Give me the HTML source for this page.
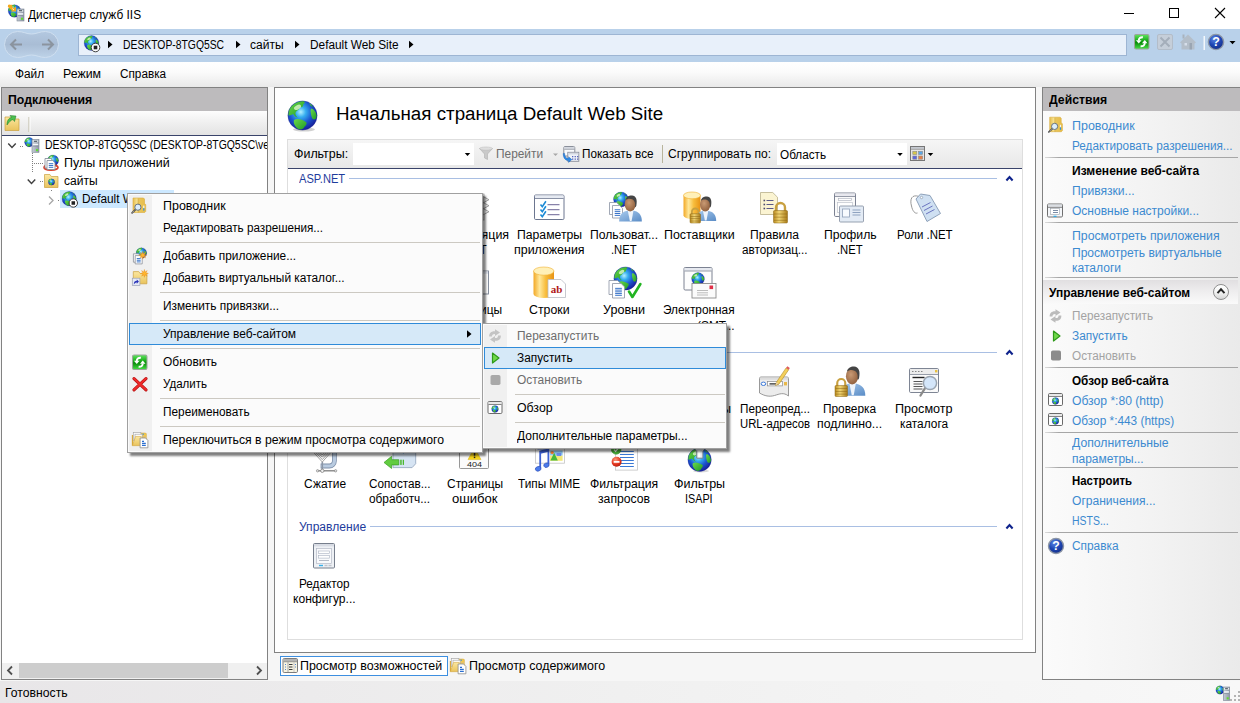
<!DOCTYPE html>
<html lang="ru"><head><meta charset="utf-8"><title>Диспетчер служб IIS</title>
<style>

html,body{margin:0;padding:0}
body{width:1240px;height:703px;position:relative;overflow:hidden;background:#f6f6f6;font-family:"Liberation Sans",sans-serif;font-size:12px;color:#000}
.a{position:absolute}
.t{position:absolute;white-space:nowrap;line-height:16px;height:16px;transform-origin:0 50%;font-size:12px}
.b{font-weight:bold}
.lk{color:#3c8ad0}
.gr{color:#a3a3a3}
.gm{color:#6d6d6d}
.hd{color:#1e3c9c}
.h1{font-size:18px;line-height:24px;height:24px;margin-top:-4px}
.sep{position:absolute;height:1px;background:#ccc9c2}
.rsep{position:absolute;height:1px;background:linear-gradient(90deg,#dcdcdc,#a6a6a6 14px);left:1045px;width:193px}
.gl{position:absolute;height:1px;background:#a9bfe3}

</style></head>
<body>

<!-- title bar -->
<div class="a" style="left:0;top:0;width:1240px;height:29px;background:#fff"></div>
<!-- nav bar -->
<div class="a" style="left:0;top:29px;width:1240px;height:33px;background:#b9d1ea"></div>
<div class="a" style="left:78px;top:34px;width:1047px;height:20px;background:#e8f0fa;border:1px solid #9db5d3"></div>
<!-- menu bar -->
<div class="a" style="left:0;top:62px;width:1240px;height:25px;background:linear-gradient(#fff,#fbfbfb 40%,#e9e9e9)"></div>
<!-- left panel -->
<div class="a" style="left:1px;top:87px;width:265px;height:591px;background:#fff;border:1px solid #828282"></div>
<div class="a" style="left:2px;top:88px;width:265px;height:22.5px;background:#bdbbbd"></div>
<div class="a" style="left:2px;top:110.5px;width:265px;height:24.5px;background:linear-gradient(#fdfdfd,#efefef 50%,#e3e3e3);border-bottom:1px solid #39436a"></div>
<div class="a" style="left:60px;top:190px;width:114px;height:18px;background:#cce8ff"></div>
<div class="a" style="left:2px;top:663px;width:265px;height:16px;background:#f0f0f0"></div>
<div class="a" style="left:19px;top:663px;width:209px;height:15px;background:#cdcdcd"></div>
<span class="t tree1" style="left:44.7px;top:137px;transform:scaleX(0.8699)">DESKTOP-8TGQ5SC (DESKTOP-8TGQ5SC\ve</span>
<div class="a" style="left:267px;top:87px;width:1px;height:593px;background:#828282"></div>
<div class="a" style="left:268px;top:87px;width:6px;height:594px;background:#f6f6f6"></div>
<!-- center panel -->
<div class="a" style="left:274px;top:87px;width:760px;height:564px;background:#fff;border:1px solid #828282"></div>
<div class="a" style="left:287px;top:139px;width:734px;height:499px;background:#fff;border:1px solid #dedede"></div>
<div class="a" style="left:288px;top:140px;width:734px;height:28px;background:linear-gradient(#f6f6f6,#e8e8e8)"></div>
<div class="a" style="left:288px;top:168px;width:734px;height:1px;background:#39436a"></div>
<div class="a" style="left:353px;top:143px;width:121px;height:22px;background:#fff"></div>
<div class="a" style="left:777px;top:143px;width:130px;height:22px;background:#fff"></div>
<div class="a" style="left:662px;top:145px;width:1px;height:18px;background:#b8b49c"></div>
<div class="gl" style="left:349px;top:178px;width:648px"></div>
<div class="gl" style="left:288px;top:352px;width:709px"></div>
<div class="gl" style="left:370px;top:526px;width:627px"></div>
<!-- tabs strip -->

<div class="a" style="left:280px;top:656px;width:166px;height:18px;background:#fff;border:1px solid #3d8fe0"></div>
<!-- right panel -->
<div class="a" style="left:1042px;top:87px;width:198px;height:591px;background:linear-gradient(90deg,#fbfbfb,#f3f3f3 55%,#eaeaea);border:1px solid #828282;border-right:0"></div>
<div class="a" style="left:1043px;top:88px;width:197px;height:22.5px;background:#bdbbbd"></div>
<div class="rsep" style="top:157px"></div>
<div class="rsep" style="top:222px"></div>
<div class="rsep" style="top:277px"></div>
<div class="a" style="left:1043px;top:280px;width:195px;height:24px;background:linear-gradient(#e1dfe1,#efeeef 50%,#fafafa)"></div>
<div class="a" style="left:1213px;top:284px;width:14px;height:14px;border-radius:50%;border:1px solid #8e8e8e;background:linear-gradient(#fff,#f4f4f4 50%,#d6d6d6)"></div>
<div class="rsep" style="top:367px"></div>
<div class="rsep" style="top:432px"></div>
<div class="rsep" style="top:467px"></div>
<div class="rsep" style="top:532px"></div>
<!-- status bar -->
<div class="a" style="left:0;top:681px;width:1240px;height:22px;background:linear-gradient(90deg,#e8e6e8,#f0f0f0 50%,#f8f8f8)"></div>

<!-- text -->
<span class="t " style="left:28.2px;top:6.5px;transform:scaleX(0.9902)">Диспетчер служб IIS</span>
<span class="t " style="left:122.7px;top:36.5px;transform:scaleX(0.8631)">DESKTOP-8TGQ5SC</span>
<span class="t " style="left:250.2px;top:36.5px;transform:scaleX(1.0030)">сайты</span>
<span class="t " style="left:310.2px;top:36.5px;transform:scaleX(0.9863)">Default Web Site</span>
<span class="t " style="left:14.7px;top:66px;transform:scaleX(0.9859)">Файл</span>
<span class="t " style="left:62.7px;top:66px;transform:scaleX(1.0297)">Режим</span>
<span class="t " style="left:119.7px;top:66px;transform:scaleX(0.9792)">Справка</span>
<span class="t b" style="left:8.2px;top:92px;transform:scaleX(1.0225)">Подключения</span>
<span class="t " style="left:63.7px;top:155px;transform:scaleX(1.0393)">Пулы приложений</span>
<span class="t " style="left:63.7px;top:173px;transform:scaleX(1.0030)">сайты</span>
<span class="t " style="left:82.2px;top:191px;transform:scaleX(0.9863)">Default Web Site</span>
<span class="t h1" style="left:336.3px;top:106px;transform:scaleX(1.0423)">Начальная страница Default Web Site</span>
<span class="t " style="left:294.2px;top:146px;transform:scaleX(1.0348)">Фильтры:</span>
<span class="t gm" style="left:496px;top:146px;transform:scaleX(0.9903)">Перейти</span>
<span class="t " style="left:581.7px;top:146px;transform:scaleX(0.9773)">Показать все</span>
<span class="t " style="left:668.2px;top:146px;transform:scaleX(1.0022)">Сгруппировать по:</span>
<span class="t " style="left:780.2px;top:147px;transform:scaleX(0.9789)">Область</span>
<span class="t hd" style="left:299.2px;top:171px;transform:scaleX(0.9255)">ASP.NET</span>
<span class="t hd" style="left:299.2px;top:519px;transform:scaleX(1.0057)">Управление</span>
<span class="t " style="left:4.7px;top:685px;transform:scaleX(1.0166)">Готовность</span>
<span class="t " style="left:300.2px;top:658px;transform:scaleX(1.0351)">Просмотр возможностей</span>
<span class="t " style="left:469.2px;top:658px;transform:scaleX(1.0351)">Просмотр содержимого</span>
<span class="t b" style="left:1049.2px;top:92px;transform:scaleX(1.0182)">Действия</span>
<span class="t lk" style="left:1071.7px;top:118px;transform:scaleX(1.0395)">Проводник</span>
<span class="t lk" style="left:1071.7px;top:138px;transform:scaleX(0.9768)">Редактировать разрешения...</span>
<span class="t b" style="left:1071.7px;top:163px;transform:scaleX(1.0010)">Изменение веб-сайта</span>
<span class="t lk" style="left:1071.7px;top:183px;transform:scaleX(1.0064)">Привязки...</span>
<span class="t lk" style="left:1071.7px;top:203px;transform:scaleX(1.0002)">Основные настройки...</span>
<span class="t lk" style="left:1071.7px;top:228px;transform:scaleX(1.0232)">Просмотреть приложения</span>
<span class="t lk" style="left:1071.7px;top:245px;transform:scaleX(1.0040)">Просмотреть виртуальные</span>
<span class="t lk" style="left:1071.7px;top:260px;transform:scaleX(1.0049)">каталоги</span>
<span class="t b" style="left:1049.2px;top:285.4px;transform:scaleX(0.9934)">Управление веб-сайтом</span>
<span class="t gr" style="left:1071.7px;top:308px;transform:scaleX(0.9786)">Перезапустить</span>
<span class="t lk" style="left:1071.7px;top:328px;transform:scaleX(0.9887)">Запустить</span>
<span class="t gr" style="left:1071.7px;top:348px;transform:scaleX(0.9786)">Остановить</span>
<span class="t b" style="left:1071.7px;top:373px;transform:scaleX(0.9776)">Обзор веб-сайта</span>
<span class="t lk" style="left:1071.7px;top:393px;transform:scaleX(1.0101)">Обзор *:80 (http)</span>
<span class="t lk" style="left:1071.7px;top:413px;transform:scaleX(0.9878)">Обзор *:443 (https)</span>
<span class="t lk" style="left:1071.7px;top:435px;transform:scaleX(1.0168)">Дополнительные</span>
<span class="t lk" style="left:1071.7px;top:450.5px;transform:scaleX(0.9966)">параметры...</span>
<span class="t b" style="left:1071.7px;top:473px;transform:scaleX(0.9511)">Настроить</span>
<span class="t lk" style="left:1071.7px;top:493px;transform:scaleX(1.0053)">Ограничения...</span>
<span class="t lk" style="left:1071.7px;top:513px;transform:scaleX(0.8711)">HSTS...</span>
<span class="t lk" style="left:1071.7px;top:538px;transform:scaleX(0.9898)">Справка</span>
<span class="t " style="left:438.2px;top:227px;transform:scaleX(1.0349)">Компиляция</span>
<span class="t " style="left:461.2px;top:242px;transform:scaleX(0.9362)">.NET</span>
<span class="t " style="left:517.2px;top:227px;transform:scaleX(1.0177)">Параметры</span>
<span class="t " style="left:514.2px;top:242px;transform:scaleX(1.0368)">приложения</span>
<span class="t " style="left:590.2px;top:227px;transform:scaleX(1.0141)">Пользоват...</span>
<span class="t " style="left:611.2px;top:242px;transform:scaleX(0.9362)">.NET</span>
<span class="t " style="left:664.2px;top:227px;transform:scaleX(1.0344)">Поставщики</span>
<span class="t " style="left:750.2px;top:227px;transform:scaleX(1.0075)">Правила</span>
<span class="t " style="left:741.7px;top:242px;transform:scaleX(0.9755)">авторизац...</span>
<span class="t " style="left:823.7px;top:227px;transform:scaleX(1.0152)">Профиль</span>
<span class="t " style="left:837.2px;top:242px;transform:scaleX(0.9362)">.NET</span>
<span class="t " style="left:896.7px;top:227px;transform:scaleX(0.9543)">Роли .NET</span>
<span class="t " style="left:446.2px;top:302px;transform:scaleX(0.9957)">Страницы</span>
<span class="t " style="left:529.2px;top:302px;transform:scaleX(1.0287)">Строки</span>
<span class="t " style="left:603.2px;top:302px;transform:scaleX(1.0488)">Уровни</span>
<span class="t " style="left:663.2px;top:302px;transform:scaleX(0.9867)">Электронная</span>
<span class="t " style="left:663.2px;top:317.5px;transform:scaleX(0.9872)">почта (SMT...</span>
<span class="t " style="left:666.2px;top:401px;transform:scaleX(1.0177)">Параметры</span>
<span class="t " style="left:687.7px;top:416px;transform:scaleX(0.9741)">SSL</span>
<span class="t " style="left:739.7px;top:401px;transform:scaleX(0.9749)">Переопред...</span>
<span class="t " style="left:739.7px;top:416px;transform:scaleX(0.9445)">URL-адресов</span>
<span class="t " style="left:823.2px;top:401px;transform:scaleX(0.9879)">Проверка</span>
<span class="t " style="left:817.2px;top:416px;transform:scaleX(1.0244)">подлинно...</span>
<span class="t " style="left:895.2px;top:401px;transform:scaleX(1.0509)">Просмотр</span>
<span class="t " style="left:899.7px;top:416px;transform:scaleX(0.9905)">каталога</span>
<span class="t " style="left:303.7px;top:476px;transform:scaleX(0.9964)">Сжатие</span>
<span class="t " style="left:368.7px;top:476px;transform:scaleX(0.9787)">Сопостав...</span>
<span class="t " style="left:369.2px;top:491px;transform:scaleX(0.9865)">обработч...</span>
<span class="t " style="left:446.7px;top:476px;transform:scaleX(0.9957)">Страницы</span>
<span class="t " style="left:451.7px;top:491px;transform:scaleX(1.0906)">ошибок</span>
<span class="t " style="left:518.2px;top:476px;transform:scaleX(0.9811)">Типы MIME</span>
<span class="t " style="left:590.2px;top:476px;transform:scaleX(1.0155)">Фильтрация</span>
<span class="t " style="left:598.2px;top:491px;transform:scaleX(1.0172)">запросов</span>
<span class="t " style="left:674.2px;top:476px;transform:scaleX(1.0442)">Фильтры</span>
<span class="t " style="left:685.2px;top:491px;transform:scaleX(0.8994)">ISAPI</span>
<span class="t " style="left:298.7px;top:576px;transform:scaleX(0.9796)">Редактор</span>
<span class="t " style="left:293.2px;top:591px;transform:scaleX(1.0066)">конфигур...</span>
<svg class="a" style="left:0;top:0" width="1240" height="703" viewBox="0 0 1240 703">
<radialGradient id="gGlobe" cx="0.44" cy="0.38" r="0.62"><stop offset="0" stop-color="#b4f0ff"/><stop offset="0.28" stop-color="#36aef0"/><stop offset="0.62" stop-color="#1c58d0"/><stop offset="1" stop-color="#17209a"/></radialGradient>
<linearGradient id="gLand" x1="0" y1="0" x2="1" y2="1"><stop offset="0" stop-color="#6ad84a"/><stop offset="1" stop-color="#1e9a24"/></linearGradient>
<linearGradient id="gGreen" x1="0" y1="0" x2="0" y2="1"><stop offset="0" stop-color="#5fe65f"/><stop offset="0.45" stop-color="#14a514"/><stop offset="0.55" stop-color="#0a8a0a"/><stop offset="1" stop-color="#46e046"/></linearGradient>
<linearGradient id="gCyl" x1="0" y1="0" x2="1" y2="0"><stop offset="0" stop-color="#f2a826"/><stop offset="0.3" stop-color="#ffe89a"/><stop offset="0.6" stop-color="#f8bd3c"/><stop offset="1" stop-color="#e89214"/></linearGradient>
<linearGradient id="gLock" x1="0" y1="0" x2="1" y2="0"><stop offset="0" stop-color="#b98a1e"/><stop offset="0.4" stop-color="#f1d675"/><stop offset="1" stop-color="#a87a18"/></linearGradient>
<linearGradient id="gBody" x1="0" y1="0" x2="1" y2="1"><stop offset="0" stop-color="#a9cbee"/><stop offset="1" stop-color="#5a8cc6"/></linearGradient>
<radialGradient id="gSkin" cx="0.4" cy="0.4" r="0.7"><stop offset="0" stop-color="#c99a74"/><stop offset="1" stop-color="#8a5a38"/></radialGradient>
<linearGradient id="gFolder" x1="0" y1="0" x2="0" y2="1"><stop offset="0" stop-color="#fbe7a0"/><stop offset="1" stop-color="#e9c35c"/></linearGradient>
<linearGradient id="gFolderV" x1="0" y1="0" x2="1" y2="0"><stop offset="0" stop-color="#e6bd4e"/><stop offset="0.3" stop-color="#f6e08c"/><stop offset="0.5" stop-color="#e9c55a"/><stop offset="1" stop-color="#e7bc48"/></linearGradient>
<linearGradient id="gSrv" x1="0" y1="0" x2="1" y2="0"><stop offset="0" stop-color="#c6cdd6"/><stop offset="1" stop-color="#8e98a6"/></linearGradient>
<radialGradient id="gHelp" cx="0.4" cy="0.3" r="0.8"><stop offset="0" stop-color="#5b86e6"/><stop offset="0.5" stop-color="#1f46b4"/><stop offset="1" stop-color="#10287c"/></radialGradient>
<radialGradient id="gRed" cx="0.4" cy="0.3" r="0.8"><stop offset="0" stop-color="#ff9a7a"/><stop offset="0.6" stop-color="#e0321c"/><stop offset="1" stop-color="#a01808"/></radialGradient>
<linearGradient id="gPill" x1="0" y1="0" x2="0" y2="1"><stop offset="0" stop-color="#b3c8e0"/><stop offset="0.5" stop-color="#a9bdd5"/><stop offset="1" stop-color="#bdd2e8"/></linearGradient>
<g transform="translate(14.5,11) scale(0.63)"><circle r="10" fill="url(#gGlobe)"/><path d="M-9.7,-2 C-9,-6.4 -4.6,-9.8 0.8,-9.9 C2,-9.4 1.6,-8.2 0.4,-7.6 C1,-6.4 -0.6,-5.6 -1.8,-5.4 C-2.2,-4 -3.6,-3.4 -4.6,-2.4 C-5.4,-1.2 -4.4,0.4 -3.2,1.6 C-4.4,1.4 -5.6,0.2 -6.4,-1 C-7.6,-0.6 -8.8,0.4 -9.7,-0.2Z" fill="url(#gLand)"/><path d="M-5.8,3 C-3.6,1.8 -0.6,2.6 2.6,4.6 C3.4,6 1.6,7.2 0.8,8.6 C-0.4,9.6 -1.8,9.9 -2.8,9.4 C-4.6,8 -6.6,5.4 -5.8,3Z" fill="url(#gLand)"/><path d="M6.2,-4.8 C8,-4.2 9.6,-2 9.8,0.6 C9.4,2.4 8.2,3.2 7,2.4 C6,1 5.8,-0.8 5.6,-2.4 C5.4,-3.6 5.6,-4.4 6.2,-4.8Z" fill="url(#gLand)"/><path d="M4.6,-8.6 C5.8,-8 6.8,-7 7.2,-6 C6.2,-6.2 5,-7 4.6,-8.6Z" fill="url(#gLand)"/><ellipse cx="-3.4" cy="-5.6" rx="2.6" ry="1.5" fill="#f4ffe0" opacity=".7" transform="rotate(-28 -3.4 -5.6)"/><circle r="10" fill="none" stroke="#141c8c" stroke-width=".5" opacity=".5"/></g><path d="M8.6,5.6 L13.6,10" stroke="#f5a81c" stroke-width="2.8" fill="none"/><path d="M16,6.3 V11.6 H10.8Z" fill="#f5a81c"/><path d="M8,4.8 h4.2 v2 h-4.2z" fill="#f5a81c"/><path d="M12.4,8.6 l1.6,1.4" stroke="#fff3d8" stroke-width=".9"/><rect x="17" y="9" width="7" height="12" fill="url(#gSrv)" stroke="#7c8694" stroke-width=".6"/><rect x="17.8" y="9.9" width="5.4" height="1.8" fill="#eef2f6"/><rect x="18.8" y="10.3" width="3.4" height=".9" fill="#26343f"/><rect x="17.8" y="13.2" width="5.4" height="1.5" fill="#f4f7fa"/><rect x="17.8" y="15.3" width="5.4" height=".6" fill="#7c8694"/><rect x="21" y="17.8" width="2" height="2" fill="#5fe02c"/><rect x="1124" y="13" width="10" height="1" fill="#000"/><rect x="1169.5" y="8.5" width="9" height="9" fill="none" stroke="#000" stroke-width="1"/><path d="M1215,8 l10,10 M1225,8 l-10,10" stroke="#000" stroke-width="1.1" fill="none"/><path d="M17.5,31.5 C24,31.5 26,34 31.5,34 C37,34 39,31.5 45.5,31.5 A13,13 0 0 1 45.5,57.5 C39,57.5 37,55 31.5,55 C26,55 24,57.5 17.5,57.5 A13,13 0 0 1 17.5,31.5Z" fill="url(#gPill)" stroke="#cfdff0" stroke-width="1"/><path d="M22,44.5 h-11 M16,39.5 l-5,5 l5,5" fill="none" stroke="#8b949f" stroke-width="2"/><path d="M42,44.5 h11 M48,39.5 l5,5 l-5,5" fill="none" stroke="#8b949f" stroke-width="2"/><g transform="translate(91.5,43) scale(0.74)"><circle r="10" fill="url(#gGlobe)"/><path d="M-9.7,-2 C-9,-6.4 -4.6,-9.8 0.8,-9.9 C2,-9.4 1.6,-8.2 0.4,-7.6 C1,-6.4 -0.6,-5.6 -1.8,-5.4 C-2.2,-4 -3.6,-3.4 -4.6,-2.4 C-5.4,-1.2 -4.4,0.4 -3.2,1.6 C-4.4,1.4 -5.6,0.2 -6.4,-1 C-7.6,-0.6 -8.8,0.4 -9.7,-0.2Z" fill="url(#gLand)"/><path d="M-5.8,3 C-3.6,1.8 -0.6,2.6 2.6,4.6 C3.4,6 1.6,7.2 0.8,8.6 C-0.4,9.6 -1.8,9.9 -2.8,9.4 C-4.6,8 -6.6,5.4 -5.8,3Z" fill="url(#gLand)"/><path d="M6.2,-4.8 C8,-4.2 9.6,-2 9.8,0.6 C9.4,2.4 8.2,3.2 7,2.4 C6,1 5.8,-0.8 5.6,-2.4 C5.4,-3.6 5.6,-4.4 6.2,-4.8Z" fill="url(#gLand)"/><path d="M4.6,-8.6 C5.8,-8 6.8,-7 7.2,-6 C6.2,-6.2 5,-7 4.6,-8.6Z" fill="url(#gLand)"/><ellipse cx="-3.4" cy="-5.6" rx="2.6" ry="1.5" fill="#f4ffe0" opacity=".7" transform="rotate(-28 -3.4 -5.6)"/><circle r="10" fill="none" stroke="#141c8c" stroke-width=".5" opacity=".5"/></g><circle cx="95.5" cy="47.5" r="4.3" fill="#fff" stroke="#3a3a3a" stroke-width="1"/><rect x="93.694" y="45.694" width="3.612" height="3.612" fill="#222"/><path d="M108,40.75 l4.5,3.75 l-4.5,3.75 z" fill="#000"/><path d="M236,40.75 l4.5,3.75 l-4.5,3.75 z" fill="#000"/><path d="M295,40.75 l4.5,3.75 l-4.5,3.75 z" fill="#000"/><path d="M409,40.75 l4.5,3.75 l-4.5,3.75 z" fill="#000"/><g transform="translate(1134,34) scale(1.03333)"><rect x=".5" y=".5" width="14" height="14" rx="1.5" fill="url(#gGreen)" stroke="#9aa59a" stroke-width="1"/><path d="M8.6,3.2 C6,3 4.6,4.4 4.6,6.4" fill="none" stroke="#fff" stroke-width="1.9"/><path d="M1.9,6 h5.4 l-2.7,3.3z" fill="#fff"/><path d="M6.4,11.8 C9,12 10.4,10.6 10.4,8.6" fill="none" stroke="#fff" stroke-width="1.9"/><path d="M7.7,9 h5.4 l-2.7,-3.3z" fill="#fff"/></g><rect x="1157.5" y="34.5" width="15" height="15" rx="1.5" fill="#c5ced9" stroke="#b3bdc9"/><path d="M1160.5,37.5 l9,9 M1169.5,37.5 l-9,9" stroke="#a4aeba" stroke-width="2" fill="none"/><path d="M1180,42.5 L1188,34.5 L1196,42.5 L1194.5,43.5 L1194.5,49.5 L1181.5,49.5 L1181.5,43.5Z" fill="#b4bec9"/><rect x="1182.5" y="34.5" width="2" height="4" fill="#a9b3be"/><rect x="1184.5" y="43" width="2.5" height="2.5" fill="#d6deea"/><rect x="1189.5" y="43" width="2.5" height="6.5" fill="#9aa5b2"/><rect x="1203.5" y="36" width="1.5" height="14" fill="#f3f7fb"/><circle cx="1216" cy="42" r="7.6" fill="url(#gHelp)" stroke="#8c96a6" stroke-width="1.4"/><text x="1216" y="46.316" font-family="Liberation Sans, sans-serif" font-weight="bold" font-size="12.45" fill="#fff" text-anchor="middle">?</text><path d="M1229.5,41 h6 l-3,3.2 z" fill="#000"/><path d="M5,117 h5.6 l1.5,2 h6.9 v11.5 h-14 z" fill="url(#gFolder)" stroke="#caa040" stroke-width=".7"/><path d="M7,125 C7,120 9,118 11.5,117.5 L10,115.5 L16,116 L14.5,121.5 L13,119.5 C11,120 9,122 7,125Z" fill="#4cc04e" stroke="#1f7a28" stroke-width=".5"/><rect x="28.5" y="117" width="1" height="15" fill="#bdb9a3"/><rect x="29.5" y="117" width="1" height="15" fill="#fff"/><path d="M8.25,143.5 l3.75,4 l3.75,-4" fill="none" stroke="#404040" stroke-width="1.4"/><path d="M27.75,179.5 l3.75,4 l3.75,-4" fill="none" stroke="#404040" stroke-width="1.4"/><path d="M49,196.5 l4,4 l-4,4" fill="none" stroke="#a6a6a6" stroke-width="1.3"/><rect x="32" y="153" width="1" height="1" fill="#808080"/><rect x="32" y="155" width="1" height="1" fill="#808080"/><rect x="32" y="157" width="1" height="1" fill="#808080"/><rect x="32" y="159" width="1" height="1" fill="#808080"/><rect x="32" y="161" width="1" height="1" fill="#808080"/><rect x="32" y="163" width="1" height="1" fill="#808080"/><rect x="32" y="165" width="1" height="1" fill="#808080"/><rect x="32" y="167" width="1" height="1" fill="#808080"/><rect x="32" y="169" width="1" height="1" fill="#808080"/><rect x="32" y="171" width="1" height="1" fill="#808080"/><rect x="34" y="163" width="1" height="1" fill="#808080"/><rect x="36" y="163" width="1" height="1" fill="#808080"/><rect x="38" y="163" width="1" height="1" fill="#808080"/><rect x="40" y="163" width="1" height="1" fill="#808080"/><rect x="42" y="163" width="1" height="1" fill="#808080"/><rect x="20" y="146" width="1" height="1" fill="#808080"/><rect x="22" y="146" width="1" height="1" fill="#808080"/><rect x="40" y="181" width="1" height="1" fill="#808080"/><rect x="42" y="181" width="1" height="1" fill="#808080"/><rect x="51" y="190" width="1" height="1" fill="#808080"/><rect x="58" y="200" width="1" height="1" fill="#808080"/><g transform="translate(29.3,142.3) scale(0.47)"><circle r="10" fill="url(#gGlobe)"/><path d="M-9.7,-2 C-9,-6.4 -4.6,-9.8 0.8,-9.9 C2,-9.4 1.6,-8.2 0.4,-7.6 C1,-6.4 -0.6,-5.6 -1.8,-5.4 C-2.2,-4 -3.6,-3.4 -4.6,-2.4 C-5.4,-1.2 -4.4,0.4 -3.2,1.6 C-4.4,1.4 -5.6,0.2 -6.4,-1 C-7.6,-0.6 -8.8,0.4 -9.7,-0.2Z" fill="url(#gLand)"/><path d="M-5.8,3 C-3.6,1.8 -0.6,2.6 2.6,4.6 C3.4,6 1.6,7.2 0.8,8.6 C-0.4,9.6 -1.8,9.9 -2.8,9.4 C-4.6,8 -6.6,5.4 -5.8,3Z" fill="url(#gLand)"/><path d="M6.2,-4.8 C8,-4.2 9.6,-2 9.8,0.6 C9.4,2.4 8.2,3.2 7,2.4 C6,1 5.8,-0.8 5.6,-2.4 C5.4,-3.6 5.6,-4.4 6.2,-4.8Z" fill="url(#gLand)"/><path d="M4.6,-8.6 C5.8,-8 6.8,-7 7.2,-6 C6.2,-6.2 5,-7 4.6,-8.6Z" fill="url(#gLand)"/><ellipse cx="-3.4" cy="-5.6" rx="2.6" ry="1.5" fill="#f4ffe0" opacity=".7" transform="rotate(-28 -3.4 -5.6)"/><circle r="10" fill="none" stroke="#141c8c" stroke-width=".5" opacity=".5"/></g><rect x="32" y="139.5" width="7" height="12.8" fill="url(#gSrv)" stroke="#7c8694" stroke-width=".6"/><rect x="32.8" y="140.4" width="5.4" height="1.8" fill="#eef2f6"/><rect x="33.8" y="140.8" width="3.4" height=".9" fill="#26343f"/><rect x="32.8" y="143.7" width="5.4" height="1.5" fill="#f4f7fa"/><rect x="32.8" y="145.8" width="5.4" height=".6" fill="#7c8694"/><rect x="36" y="149.1" width="2" height="2" fill="#5fe02c"/><g transform="translate(53,160.5) scale(0.56)"><circle r="10" fill="url(#gGlobe)"/><path d="M-9.7,-2 C-9,-6.4 -4.6,-9.8 0.8,-9.9 C2,-9.4 1.6,-8.2 0.4,-7.6 C1,-6.4 -0.6,-5.6 -1.8,-5.4 C-2.2,-4 -3.6,-3.4 -4.6,-2.4 C-5.4,-1.2 -4.4,0.4 -3.2,1.6 C-4.4,1.4 -5.6,0.2 -6.4,-1 C-7.6,-0.6 -8.8,0.4 -9.7,-0.2Z" fill="url(#gLand)"/><path d="M-5.8,3 C-3.6,1.8 -0.6,2.6 2.6,4.6 C3.4,6 1.6,7.2 0.8,8.6 C-0.4,9.6 -1.8,9.9 -2.8,9.4 C-4.6,8 -6.6,5.4 -5.8,3Z" fill="url(#gLand)"/><path d="M6.2,-4.8 C8,-4.2 9.6,-2 9.8,0.6 C9.4,2.4 8.2,3.2 7,2.4 C6,1 5.8,-0.8 5.6,-2.4 C5.4,-3.6 5.6,-4.4 6.2,-4.8Z" fill="url(#gLand)"/><path d="M4.6,-8.6 C5.8,-8 6.8,-7 7.2,-6 C6.2,-6.2 5,-7 4.6,-8.6Z" fill="url(#gLand)"/><ellipse cx="-3.4" cy="-5.6" rx="2.6" ry="1.5" fill="#f4ffe0" opacity=".7" transform="rotate(-28 -3.4 -5.6)"/><circle r="10" fill="none" stroke="#141c8c" stroke-width=".5" opacity=".5"/></g><ellipse cx="51" cy="167.5" rx="7" ry="2.6" fill="none" stroke="#d8402c" stroke-width="1.6"/><path d="M45,158.5 h5.76 l2.24,2.24 v7.26 h-8 z" fill="#fff" stroke="#7f8896" stroke-width=".8"/><path d="M47,160.5 h5.76 l2.24,2.24 v6.76 h-8 z" fill="#fff" stroke="#7f8896" stroke-width=".8"/><rect x="48.76" y="163.2" width="4.48" height="1" fill="#3a74c8"/><rect x="48.76" y="165" width="4.48" height="1" fill="#3a74c8"/><rect x="48.76" y="166.8" width="4.48" height="1" fill="#3a74c8"/><path d="M44.5,174.5 h5.4 l1.5,2 h6.6 v11 h-13.5 z" fill="url(#gFolder)" stroke="#caa040" stroke-width=".7"/><g transform="translate(51.5,182) scale(0.32)"><circle r="10" fill="url(#gGlobe)"/><path d="M-9.7,-2 C-9,-6.4 -4.6,-9.8 0.8,-9.9 C2,-9.4 1.6,-8.2 0.4,-7.6 C1,-6.4 -0.6,-5.6 -1.8,-5.4 C-2.2,-4 -3.6,-3.4 -4.6,-2.4 C-5.4,-1.2 -4.4,0.4 -3.2,1.6 C-4.4,1.4 -5.6,0.2 -6.4,-1 C-7.6,-0.6 -8.8,0.4 -9.7,-0.2Z" fill="url(#gLand)"/><path d="M-5.8,3 C-3.6,1.8 -0.6,2.6 2.6,4.6 C3.4,6 1.6,7.2 0.8,8.6 C-0.4,9.6 -1.8,9.9 -2.8,9.4 C-4.6,8 -6.6,5.4 -5.8,3Z" fill="url(#gLand)"/><path d="M6.2,-4.8 C8,-4.2 9.6,-2 9.8,0.6 C9.4,2.4 8.2,3.2 7,2.4 C6,1 5.8,-0.8 5.6,-2.4 C5.4,-3.6 5.6,-4.4 6.2,-4.8Z" fill="url(#gLand)"/><path d="M4.6,-8.6 C5.8,-8 6.8,-7 7.2,-6 C6.2,-6.2 5,-7 4.6,-8.6Z" fill="url(#gLand)"/><ellipse cx="-3.4" cy="-5.6" rx="2.6" ry="1.5" fill="#f4ffe0" opacity=".7" transform="rotate(-28 -3.4 -5.6)"/><circle r="10" fill="none" stroke="#141c8c" stroke-width=".5" opacity=".5"/></g><g transform="translate(69.2,198.7) scale(0.72)"><circle r="10" fill="url(#gGlobe)"/><path d="M-9.7,-2 C-9,-6.4 -4.6,-9.8 0.8,-9.9 C2,-9.4 1.6,-8.2 0.4,-7.6 C1,-6.4 -0.6,-5.6 -1.8,-5.4 C-2.2,-4 -3.6,-3.4 -4.6,-2.4 C-5.4,-1.2 -4.4,0.4 -3.2,1.6 C-4.4,1.4 -5.6,0.2 -6.4,-1 C-7.6,-0.6 -8.8,0.4 -9.7,-0.2Z" fill="url(#gLand)"/><path d="M-5.8,3 C-3.6,1.8 -0.6,2.6 2.6,4.6 C3.4,6 1.6,7.2 0.8,8.6 C-0.4,9.6 -1.8,9.9 -2.8,9.4 C-4.6,8 -6.6,5.4 -5.8,3Z" fill="url(#gLand)"/><path d="M6.2,-4.8 C8,-4.2 9.6,-2 9.8,0.6 C9.4,2.4 8.2,3.2 7,2.4 C6,1 5.8,-0.8 5.6,-2.4 C5.4,-3.6 5.6,-4.4 6.2,-4.8Z" fill="url(#gLand)"/><path d="M4.6,-8.6 C5.8,-8 6.8,-7 7.2,-6 C6.2,-6.2 5,-7 4.6,-8.6Z" fill="url(#gLand)"/><ellipse cx="-3.4" cy="-5.6" rx="2.6" ry="1.5" fill="#f4ffe0" opacity=".7" transform="rotate(-28 -3.4 -5.6)"/><circle r="10" fill="none" stroke="#141c8c" stroke-width=".5" opacity=".5"/></g><circle cx="73.3" cy="203" r="4.2" fill="#fff" stroke="#3a3a3a" stroke-width="1"/><rect x="71.536" y="201.236" width="3.528" height="3.528" fill="#222"/><path d="M12,666.5 l-4,4 l4,4" fill="none" stroke="#505050" stroke-width="1.8"/><path d="M257,666.5 l4,4 l-4,4" fill="none" stroke="#505050" stroke-width="1.8"/><ellipse cx="304" cy="129.5" rx="11" ry="2" fill="#000" opacity=".18"/><g transform="translate(302.5,115.5) scale(1.46)"><circle r="10" fill="url(#gGlobe)"/><path d="M-9.7,-2 C-9,-6.4 -4.6,-9.8 0.8,-9.9 C2,-9.4 1.6,-8.2 0.4,-7.6 C1,-6.4 -0.6,-5.6 -1.8,-5.4 C-2.2,-4 -3.6,-3.4 -4.6,-2.4 C-5.4,-1.2 -4.4,0.4 -3.2,1.6 C-4.4,1.4 -5.6,0.2 -6.4,-1 C-7.6,-0.6 -8.8,0.4 -9.7,-0.2Z" fill="url(#gLand)"/><path d="M-5.8,3 C-3.6,1.8 -0.6,2.6 2.6,4.6 C3.4,6 1.6,7.2 0.8,8.6 C-0.4,9.6 -1.8,9.9 -2.8,9.4 C-4.6,8 -6.6,5.4 -5.8,3Z" fill="url(#gLand)"/><path d="M6.2,-4.8 C8,-4.2 9.6,-2 9.8,0.6 C9.4,2.4 8.2,3.2 7,2.4 C6,1 5.8,-0.8 5.6,-2.4 C5.4,-3.6 5.6,-4.4 6.2,-4.8Z" fill="url(#gLand)"/><path d="M4.6,-8.6 C5.8,-8 6.8,-7 7.2,-6 C6.2,-6.2 5,-7 4.6,-8.6Z" fill="url(#gLand)"/><ellipse cx="-3.4" cy="-5.6" rx="2.6" ry="1.5" fill="#f4ffe0" opacity=".7" transform="rotate(-28 -3.4 -5.6)"/><circle r="10" fill="none" stroke="#141c8c" stroke-width=".5" opacity=".5"/></g><path d="M464.75,153 h5.5 l-2.75,3 z" fill="#000"/><path d="M897.25,153 h5.5 l-2.75,3 z" fill="#000"/><path d="M927.75,153 h5.5 l-2.75,3 z" fill="#000"/><path d="M553,153.5 h5 l-2.5,2.6 z" fill="#a8a8a8"/><path d="M479.5,148.5 h13 l-5,5.5 v5.5 l-3,-1.6 v-3.9z" fill="#c9c9c9" stroke="#b0b0b0" stroke-width=".6"/><ellipse cx="486" cy="148.6" rx="6.5" ry="1.6" fill="#dedede" stroke="#b8b8b8" stroke-width=".5"/><rect x="563.8" y="146.5" width="11" height="9.5" rx="1.2" fill="#fafbfd" stroke="#8a8f9a" stroke-width="1"/><rect x="564.3" y="147" width="10" height="1.8" fill="#d4d8e0"/><rect x="564.3" y="148.8" width="10" height=".8" fill="#8a8f9a"/><rect x="567.8" y="152.3" width="11" height="9" fill="#eef2f8" stroke="#8a8f9a" stroke-width=".9"/><rect x="568.3" y="152.8" width="10" height="1.6" fill="#d4d8e0"/><path d="M572,156 h1.3 v1.2 h-1.3z M574.6,156 h1.3 v1.2 h-1.3z M577,156 h1.3 v1.2 h-1.3z M572,158.6 h1.3 v1.2 h-1.3z M574.6,158.6 h1.3 v1.2 h-1.3z M577,158.6 h1.3 v1.2 h-1.3z" fill="#5a64b8"/><path d="M564.6,153.4 c0,3.4 1.6,5 4,5.2 v-1.8 l3.2,2.8 l-3.2,2.8 v-1.8 c-3.4,-0.2 -5.4,-2.6 -5.4,-7.2z" fill="#2a8ae8" stroke="#1a5cb0" stroke-width=".4"/><rect x="910.5" y="146.5" width="14" height="14" fill="#e6e6e6" stroke="#767676" stroke-width="1"/><rect x="911" y="147" width="13" height="1.8" fill="#c4c8d0"/><rect x="911" y="148.8" width="13" height=".8" fill="#8a8a8a"/><rect x="912.8" y="151.3" width="4" height="3.2" fill="#d8c84a" stroke="#8a8a8a" stroke-width=".6"/><rect x="918.6" y="151.3" width="4" height="3.2" fill="#5aa6e8" stroke="#8a8a8a" stroke-width=".6"/><rect x="912.8" y="156" width="4" height="3.2" fill="#5a64e0" stroke="#8a8a8a" stroke-width=".6"/><rect x="918.6" y="156" width="4" height="3.2" fill="#e8824a" stroke="#8a8a8a" stroke-width=".6"/><path d="M1006.4,180.5 l3.1,-3.4 l3.1,3.4" fill="none" stroke="#0f238c" stroke-width="2.1"/><path d="M1006.4,354.5 l3.1,-3.4 l3.1,3.4" fill="none" stroke="#0f238c" stroke-width="2.1"/><path d="M1006.4,528.5 l3.1,-3.4 l3.1,3.4" fill="none" stroke="#0f238c" stroke-width="2.1"/><path d="M1217.5,293.1 l3.5,-3.8 l3.5,3.8" fill="none" stroke="#262626" stroke-width="2"/><rect x="466" y="194" width="18" height="26" fill="#e4e4e4" stroke="#9a9a9a" stroke-width=".8"/><path d="M483,196.5 l6,3.2 l-6,3.2z M483,202.5 l6,3.2 l-6,3.2z M483,208.5 l6,3.2 l-6,3.2z" fill="#f2f2f2" stroke="#8e8e8e" stroke-width=".8"/><rect x="534.5" y="195" width="29.5" height="24.5" rx="1.2" fill="#fff" stroke="#6c7690" stroke-width="1"/><rect x="535" y="195.5" width="28.5" height="2.6" fill="#e6eaf2"/><rect x="535" y="198.1" width="28.5" height=".8" fill="#6c7690"/><path d="M540.5,204.5 l1.8,2.2 l3.6,-5.4" fill="none" stroke="#1c8ad6" stroke-width="1.6"/><rect x="547.5" y="204.2" width="12" height="1" fill="#6c6494"/><path d="M540.5,209.5 l1.8,2.2 l3.6,-5.4" fill="none" stroke="#1c8ad6" stroke-width="1.6"/><rect x="547.5" y="209.2" width="12" height="1" fill="#6c6494"/><path d="M540.5,214.5 l1.8,2.2 l3.6,-5.4" fill="none" stroke="#1c8ad6" stroke-width="1.6"/><rect x="547.5" y="214.2" width="12" height="1" fill="#6c6494"/><g transform="translate(621,199.5) scale(0.75)"><circle r="10" fill="url(#gGlobe)"/><path d="M-9.7,-2 C-9,-6.4 -4.6,-9.8 0.8,-9.9 C2,-9.4 1.6,-8.2 0.4,-7.6 C1,-6.4 -0.6,-5.6 -1.8,-5.4 C-2.2,-4 -3.6,-3.4 -4.6,-2.4 C-5.4,-1.2 -4.4,0.4 -3.2,1.6 C-4.4,1.4 -5.6,0.2 -6.4,-1 C-7.6,-0.6 -8.8,0.4 -9.7,-0.2Z" fill="url(#gLand)"/><path d="M-5.8,3 C-3.6,1.8 -0.6,2.6 2.6,4.6 C3.4,6 1.6,7.2 0.8,8.6 C-0.4,9.6 -1.8,9.9 -2.8,9.4 C-4.6,8 -6.6,5.4 -5.8,3Z" fill="url(#gLand)"/><path d="M6.2,-4.8 C8,-4.2 9.6,-2 9.8,0.6 C9.4,2.4 8.2,3.2 7,2.4 C6,1 5.8,-0.8 5.6,-2.4 C5.4,-3.6 5.6,-4.4 6.2,-4.8Z" fill="url(#gLand)"/><path d="M4.6,-8.6 C5.8,-8 6.8,-7 7.2,-6 C6.2,-6.2 5,-7 4.6,-8.6Z" fill="url(#gLand)"/><ellipse cx="-3.4" cy="-5.6" rx="2.6" ry="1.5" fill="#f4ffe0" opacity=".7" transform="rotate(-28 -3.4 -5.6)"/><circle r="10" fill="none" stroke="#141c8c" stroke-width=".5" opacity=".5"/></g><path d="M609.5,202.5 h7.2 l2.8,2.8 v9.2 h-10 z" fill="#fff" stroke="#8a93a3" stroke-width=".8"/><path d="M612.5,205.5 h7.2 l2.8,2.8 v9.7 h-10 z" fill="#fff" stroke="#8a93a3" stroke-width=".8"/><rect x="614.7" y="209.25" width="5.6" height="1" fill="#3a74c8"/><rect x="614.7" y="211.125" width="5.6" height="1" fill="#3a74c8"/><rect x="614.7" y="213" width="5.6" height="1" fill="#3a74c8"/><rect x="614.7" y="214.875" width="5.6" height="1" fill="#3a74c8"/><g transform="translate(630.5,195.5) scale(1.08)"><path d="M-10.5,24 C-10.5,17.5 -7,14.8 -2.4,14 L2.4,14 C7,14.8 10.5,17.5 10.5,24Z" fill="url(#gBody)"/><path d="M-2.6,13.6 L-0.6,23.5 L1,23.5 L2.8,13.6Z" fill="#eef4fb"/><ellipse cx="-0.3" cy="8" rx="5.1" ry="6.7" fill="url(#gSkin)"/><path d="M-4.6,4.4 C-4,0.8 -1,-0.2 1.4,0 C5,0.4 6.6,3.4 5.4,9.4 C5,10.6 4.4,11.2 4.2,10.4 C4.6,7 4,4.6 1.6,3.4 C-0.6,2.6 -3,2.8 -4.6,4.4Z" fill="#454545"/></g><path d="M683.5,195.4 v20.2 a8.5,3.4 0 0 0 17,0 v-20.2 z" fill="url(#gCyl)"/><ellipse cx="692" cy="195.4" rx="8.5" ry="3.4" fill="#fff0b8" stroke="#f0b030" stroke-width=".6"/><g transform="translate(705.5,196.5) scale(1.02)"><path d="M-10.5,24 C-10.5,17.5 -7,14.8 -2.4,14 L2.4,14 C7,14.8 10.5,17.5 10.5,24Z" fill="url(#gBody)"/><path d="M-2.6,13.6 L-0.6,23.5 L1,23.5 L2.8,13.6Z" fill="#eef4fb"/><ellipse cx="-0.3" cy="8" rx="5.1" ry="6.7" fill="url(#gSkin)"/><path d="M-4.6,4.4 C-4,0.8 -1,-0.2 1.4,0 C5,0.4 6.6,3.4 5.4,9.4 C5,10.6 4.4,11.2 4.2,10.4 C4.6,7 4,4.6 1.6,3.4 C-0.6,2.6 -3,2.8 -4.6,4.4Z" fill="#454545"/></g><path d="M691.89,214.72 v-2.86 a3.36,3.36 0 0 1 6.72,0 v2.86" fill="none" stroke="#c8a040" stroke-width="1.785"/><rect x="690" y="213.72" width="10.5" height="9.28" rx="1" fill="url(#gLock)" stroke="#8a6414" stroke-width=".5"/><rect x="690.5" y="216.04" width="9.5" height=".7" fill="#8a6414" opacity=".7"/><rect x="690.5" y="218.36" width="9.5" height=".7" fill="#8a6414" opacity=".7"/><rect x="690.5" y="220.68" width="9.5" height=".7" fill="#8a6414" opacity=".7"/><path d="M760.5,192.5 h12.24 l4.76,4.76 v17.24 h-17 z" fill="#fbf4d2" stroke="#b9b08a" stroke-width=".8"/><rect x="763.5" y="199.7" width="1.6" height="1.6" fill="#4a4a6a"/><rect x="766.5" y="200" width="7" height="1" fill="#5a5a8a"/><rect x="763.5" y="203.7" width="1.6" height="1.6" fill="#4a4a6a"/><rect x="766.5" y="204" width="7" height="1" fill="#5a5a8a"/><rect x="763.5" y="207.7" width="1.6" height="1.6" fill="#4a4a6a"/><rect x="766.5" y="208" width="7" height="1" fill="#5a5a8a"/><path d="M776.02,211.53 v-4.05 a4.48,4.48 0 0 1 8.96,0 v4.05" fill="none" stroke="#c8a040" stroke-width="2.38"/><rect x="773.5" y="210.53" width="14" height="12.47" rx="1" fill="url(#gLock)" stroke="#8a6414" stroke-width=".5"/><rect x="774" y="213.648" width="13" height=".7" fill="#8a6414" opacity=".7"/><rect x="774" y="216.765" width="13" height=".7" fill="#8a6414" opacity=".7"/><rect x="774" y="219.882" width="13" height=".7" fill="#8a6414" opacity=".7"/><rect x="834.5" y="193" width="21" height="23.5" rx="1.2" fill="#fafafa" stroke="#7c8292" stroke-width="1"/><rect x="835" y="193.5" width="20" height="2.6" fill="#e8e8ee"/><rect x="835" y="196.1" width="20" height=".8" fill="#7c8292"/><rect x="838.5" y="198.5" width="13" height="2" fill="#fff" stroke="#a8aebb" stroke-width=".6"/><rect x="837.5" y="202.5" width="15" height="10" fill="#fff" stroke="#b4b9c4" stroke-width=".6"/><rect x="839.5" y="206" width="24" height="16" rx="1" fill="#e3ebf5" stroke="#8d97a8" stroke-width=".9"/><rect x="842.5" y="209" width="7" height="8" fill="#f8fbff" stroke="#8fa0b8" stroke-width=".8"/><path d="M852.5,210 h8 M852.5,212.5 h8 M852.5,215 h8" stroke="#8fa3c0" stroke-width="1"/><path d="M919,196.5 C912,194 909.5,199 911.5,206 C912.5,211 915,214 917.5,213" fill="none" stroke="#8c8c8c" stroke-width=".9"/><path d="M916,199 L920.5,194 L930,195.5 L940.5,213.5 L927,221.5 Z" fill="#cfe0f2" stroke="#8fa2ba" stroke-width="1"/><circle cx="921.5" cy="197.5" r="1.2" fill="#fff" stroke="#7a8aa0" stroke-width=".6"/><path d="M922,207 l8.5,-4.5 M924,210.5 l8.5,-4.5 M926,214 l8.5,-4.5" stroke="#6a74c0" stroke-width="1"/><rect x="462" y="271" width="26.5" height="23" fill="#fff" stroke="#7a8496" stroke-width=".9"/><rect x="462.5" y="271.5" width="25.5" height="2.2" fill="#dfe4ee"/><path d="M533.5,271.1 v22.8 a10.25,4.1 0 0 0 20.5,0 v-22.8 z" fill="url(#gCyl)"/><ellipse cx="543.75" cy="271.1" rx="10.25" ry="4.1" fill="#fff0b8" stroke="#f0b030" stroke-width=".6"/><path d="M548,279.5 h13 l4.5,4.5 v13.5 h-17.5z" fill="#fff" stroke="#b9bcc4" stroke-width=".8"/><text x="556.6" y="293" font-family="Liberation Serif, serif" font-weight="bold" font-size="11" fill="#b01818" text-anchor="middle">ab</text><g transform="translate(625.5,278.5) scale(1.16)"><circle r="10" fill="url(#gGlobe)"/><path d="M-9.7,-2 C-9,-6.4 -4.6,-9.8 0.8,-9.9 C2,-9.4 1.6,-8.2 0.4,-7.6 C1,-6.4 -0.6,-5.6 -1.8,-5.4 C-2.2,-4 -3.6,-3.4 -4.6,-2.4 C-5.4,-1.2 -4.4,0.4 -3.2,1.6 C-4.4,1.4 -5.6,0.2 -6.4,-1 C-7.6,-0.6 -8.8,0.4 -9.7,-0.2Z" fill="url(#gLand)"/><path d="M-5.8,3 C-3.6,1.8 -0.6,2.6 2.6,4.6 C3.4,6 1.6,7.2 0.8,8.6 C-0.4,9.6 -1.8,9.9 -2.8,9.4 C-4.6,8 -6.6,5.4 -5.8,3Z" fill="url(#gLand)"/><path d="M6.2,-4.8 C8,-4.2 9.6,-2 9.8,0.6 C9.4,2.4 8.2,3.2 7,2.4 C6,1 5.8,-0.8 5.6,-2.4 C5.4,-3.6 5.6,-4.4 6.2,-4.8Z" fill="url(#gLand)"/><path d="M4.6,-8.6 C5.8,-8 6.8,-7 7.2,-6 C6.2,-6.2 5,-7 4.6,-8.6Z" fill="url(#gLand)"/><ellipse cx="-3.4" cy="-5.6" rx="2.6" ry="1.5" fill="#f4ffe0" opacity=".7" transform="rotate(-28 -3.4 -5.6)"/><circle r="10" fill="none" stroke="#141c8c" stroke-width=".5" opacity=".5"/></g><path d="M609,280.5 h8.64 l3.36,3.36 v10.64 h-12 z" fill="#fff" stroke="#8a93a3" stroke-width=".8"/><path d="M612.5,283.5 h8.64 l3.36,3.36 v11.14 h-12 z" fill="#fff" stroke="#8a93a3" stroke-width=".8"/><rect x="615.14" y="287.85" width="6.72" height="1" fill="#3a74c8"/><rect x="615.14" y="289.59" width="6.72" height="1" fill="#3a74c8"/><rect x="615.14" y="291.33" width="6.72" height="1" fill="#3a74c8"/><rect x="615.14" y="293.07" width="6.72" height="1" fill="#3a74c8"/><rect x="615.14" y="294.81" width="6.72" height="1" fill="#3a74c8"/><path d="M629,291.5 l3.4,5.5 l8,-13" fill="none" stroke="#22b422" stroke-width="2.6" stroke-linecap="round" stroke-linejoin="round"/><rect x="684" y="267.5" width="28" height="22.5" rx="1.2" fill="#fdfdfd" stroke="#7c8292" stroke-width="1"/><rect x="684.5" y="268" width="27" height="2.6" fill="#e6e9f0"/><rect x="684.5" y="270.6" width="27" height=".8" fill="#7c8292"/><g transform="translate(698,279) scale(0.64)"><circle r="10" fill="url(#gGlobe)"/><path d="M-9.7,-2 C-9,-6.4 -4.6,-9.8 0.8,-9.9 C2,-9.4 1.6,-8.2 0.4,-7.6 C1,-6.4 -0.6,-5.6 -1.8,-5.4 C-2.2,-4 -3.6,-3.4 -4.6,-2.4 C-5.4,-1.2 -4.4,0.4 -3.2,1.6 C-4.4,1.4 -5.6,0.2 -6.4,-1 C-7.6,-0.6 -8.8,0.4 -9.7,-0.2Z" fill="url(#gLand)"/><path d="M-5.8,3 C-3.6,1.8 -0.6,2.6 2.6,4.6 C3.4,6 1.6,7.2 0.8,8.6 C-0.4,9.6 -1.8,9.9 -2.8,9.4 C-4.6,8 -6.6,5.4 -5.8,3Z" fill="url(#gLand)"/><path d="M6.2,-4.8 C8,-4.2 9.6,-2 9.8,0.6 C9.4,2.4 8.2,3.2 7,2.4 C6,1 5.8,-0.8 5.6,-2.4 C5.4,-3.6 5.6,-4.4 6.2,-4.8Z" fill="url(#gLand)"/><path d="M4.6,-8.6 C5.8,-8 6.8,-7 7.2,-6 C6.2,-6.2 5,-7 4.6,-8.6Z" fill="url(#gLand)"/><ellipse cx="-3.4" cy="-5.6" rx="2.6" ry="1.5" fill="#f4ffe0" opacity=".7" transform="rotate(-28 -3.4 -5.6)"/><circle r="10" fill="none" stroke="#141c8c" stroke-width=".5" opacity=".5"/></g><rect x="692" y="283.5" width="24" height="14.5" fill="#fbfbfb" stroke="#8c8c8c" stroke-width=".9"/><rect x="709.5" y="285.5" width="3.6" height="3.6" fill="#e03048"/><path d="M697,290.5 h11 M697,292.8 h11 M697,295 h11" stroke="#b4b4b4" stroke-width=".9"/><path d="M759.5,378.5 a1.5,1.5 0 0 1 1.5,-1.5 h26 a1.5,1.5 0 0 1 1.5,1.5 v17.5 c-5,-4 -9,-2 -14,-0.5 c-5,1.5 -10,0.5 -15,-2.5z" fill="#ececec" stroke="#8e8e8e" stroke-width=".9"/><rect x="760" y="377.5" width="28" height="2.2" fill="#dcdcdc"/><rect x="767.5" y="381.5" width="15" height="4.4" fill="#fff" stroke="#8a8a8a" stroke-width=".7"/><rect x="769.5" y="383.3" width="9" height="1.2" fill="#222"/><ellipse cx="763.4" cy="383.8" rx="2.3" ry="1.7" fill="#fff" stroke="#3a78d8" stroke-width="1"/><rect x="784" y="382" width="3" height="3.4" fill="#e8b84a"/><path d="M775.5,385.5 l1,-3.4 l9.6,-14.2 l2.6,1.8 l-9.6,14.2z" fill="#f3cf5a" stroke="#b08a28" stroke-width=".6"/><path d="M786.1,367.9 l1.3,-1.6 l2.4,1.6 l-1.1,1.8z" fill="#e05a5a"/><path d="M775.5,385.5 l1,-3.4 l2.2,1.5z" fill="#e8d0a0"/><g transform="translate(852.5,366.5) scale(1.22)"><path d="M-10.5,24 C-10.5,17.5 -7,14.8 -2.4,14 L2.4,14 C7,14.8 10.5,17.5 10.5,24Z" fill="url(#gBody)"/><path d="M-2.6,13.6 L-0.6,23.5 L1,23.5 L2.8,13.6Z" fill="#eef4fb"/><ellipse cx="-0.3" cy="8" rx="5.1" ry="6.7" fill="url(#gSkin)"/><path d="M-4.6,4.4 C-4,0.8 -1,-0.2 1.4,0 C5,0.4 6.6,3.4 5.4,9.4 C5,10.6 4.4,11.2 4.2,10.4 C4.6,7 4,4.6 1.6,3.4 C-0.6,2.6 -3,2.8 -4.6,4.4Z" fill="#454545"/></g><path d="M837.25,386.48 v-3.48 a4,4 0 0 1 8,0 v3.48" fill="none" stroke="#c8a040" stroke-width="2.125"/><rect x="835" y="385.48" width="12.5" height="11.02" rx="1" fill="url(#gLock)" stroke="#8a6414" stroke-width=".5"/><rect x="835.5" y="388.235" width="11.5" height=".7" fill="#8a6414" opacity=".7"/><rect x="835.5" y="390.99" width="11.5" height=".7" fill="#8a6414" opacity=".7"/><rect x="835.5" y="393.745" width="11.5" height=".7" fill="#8a6414" opacity=".7"/><rect x="909.5" y="368.5" width="29" height="24" rx="1.2" fill="#fafafa" stroke="#7e8594" stroke-width="1"/><rect x="910" y="369" width="28" height="5" fill="#ececec"/><rect x="910" y="374" width="28" height=".8" fill="#7e8594"/><path d="M912,371.5 h1.5 M915,371.5 h1.5 M918,371.5 h1.5 M921,371.5 h1.5" stroke="#7a7a7a" stroke-width=".9"/><rect x="935" y="370" width="2.4" height="2.4" fill="#e8c040"/><path d="M912.5,377.5 h12" stroke="#222" stroke-width="1.4"/><path d="M913.5,381.5 h9 M913.5,384 h9 M913.5,386.5 h9 M913.5,389 h9" stroke="#444" stroke-width=".9"/><line x1="925.38" y1="387.62" x2="920.5" y2="395.5" stroke="#8a8a8a" stroke-width="2.31" stroke-linecap="round"/><circle cx="930" cy="383" r="6.6" fill="#d4e6fa" stroke="#9aa4b0" stroke-width="1.452"/><path d="M311.5,450 L322.3,462 L333,450 M313.5,450 L322.3,459.6 L331,450 M315.5,450 L322.3,457.2 L329,450 M317.5,450 L322.3,455 L327,450" fill="none" stroke="#8c8c8c" stroke-width=".8"/><path d="M334.4,445 V461 a5,5 0 0 1 -5,5 H320.6" fill="none" stroke="#7f90aa" stroke-width="4.8"/><path d="M334.4,445 V461 a5,5 0 0 1 -5,5 H321.2" fill="none" stroke="#b9cbe0" stroke-width="3.2"/><path d="M322.3,462 V470.5" stroke="#8c96a6" stroke-width="1.6"/><path d="M318,470.8 H335.5" stroke="#7e7e7e" stroke-width="1.3"/><circle cx="322.3" cy="470.8" r="1.7" fill="#f0f0f0" stroke="#7a7a7a" stroke-width=".7"/><circle cx="317.6" cy="470.8" r="1.2" fill="#e0e0e0" stroke="#7a7a7a" stroke-width=".6"/><circle cx="335.6" cy="470.8" r="1.2" fill="#e0e0e0" stroke="#7a7a7a" stroke-width=".6"/><path d="M393,445 h19 l3.7,3.7 v15 l-3.6,3.9 h-19.1z" fill="#d6e4f3" stroke="#98aac2" stroke-width=".9"/><path d="M397,445 h9 l-2.5,9z" fill="#5a9ad8"/><path d="M384,462.5 l7.6,-6.2 v3.4 h7.2 v5.2 h-7.2 v3.6z" fill="#62cc40" stroke="#3a9c24" stroke-width=".7"/><rect x="400.2" y="459.7" width="1.5" height="5.2" fill="#4cb82e"/><rect x="402.7" y="459.7" width="1.3" height="5.2" fill="#4cb82e"/><rect x="459.5" y="443.5" width="29" height="25" rx="1" fill="#fbfbfb" stroke="#8c8c8c" stroke-width=".9"/><path d="M474.5,447.4 l6.5,12.2 h-13z" fill="#f7d51c" stroke="#d8b010" stroke-width=".5"/><rect x="473.8" y="451.5" width="1.5" height="4.2" fill="#222"/><rect x="473.8" y="456.6" width="1.5" height="1.5" fill="#222"/><text x="467" y="467" font-family="Liberation Sans, sans-serif" font-size="8" fill="#1a1a1a" textLength="15" lengthAdjust="spacingAndGlyphs">404</text><rect x="535.5" y="444.5" width="29" height="18.7" fill="#fff" stroke="#c4c4c4" stroke-width=".8"/><path d="M537.5,449 h8" stroke="#5a7ad8" stroke-width="1"/><rect x="550" y="450.6" width="12.6" height="5" fill="#8cc8f4"/><rect x="550" y="455.6" width="12.6" height="5.2" fill="#f2e878"/><rect x="556.6" y="453" width="4.6" height="3" fill="#6a8ae8"/><path d="M550.4,460.4 l3.8,-7.6 l3.6,7.6z" fill="#44b83c"/><circle cx="552.2" cy="452.6" r="1.7" fill="#f08030"/><path d="M540.2,468 V451.4 L548.4,449.4 V464.6" fill="none" stroke="#3c60d4" stroke-width="1.8"/><path d="M540.2,452.4 L548.4,450.4" stroke="#3c60d4" stroke-width="2.6"/><ellipse cx="538.2" cy="468.8" rx="2.9" ry="2.3" fill="#4c7cec" stroke="#2c4cb4" stroke-width=".6" transform="rotate(-20 538.2 468.8)"/><ellipse cx="546.4" cy="465.2" rx="2.7" ry="2.2" fill="#4c7cec" stroke="#2c4cb4" stroke-width=".6" transform="rotate(-20 546.4 465.2)"/><rect x="615.6" y="443.5" width="22" height="26.6" fill="#fff" stroke="#c4c4c4" stroke-width=".8"/><rect x="620" y="451" width="13.8" height="1" fill="#3a78d4"/><rect x="620" y="454" width="13.8" height="1" fill="#3a78d4"/><rect x="620" y="457" width="13.8" height="1" fill="#3a78d4"/><rect x="620" y="460" width="13.8" height="1" fill="#3a78d4"/><rect x="620" y="463" width="13.8" height="1" fill="#3a78d4"/><rect x="620" y="466" width="13.8" height="1" fill="#3a78d4"/><circle cx="616.2" cy="449.4" r="4.8" fill="#4cb43a" stroke="#2e8a22" stroke-width=".6"/><path d="M614,449.6 l1.6,1.8 l3,-3.6" fill="none" stroke="#fff" stroke-width="1.2"/><circle cx="616.6" cy="461.8" r="5" fill="url(#gRed)"/><rect x="613.6" y="460.9" width="6" height="1.9" rx=".5" fill="#fff"/><ellipse cx="701" cy="471" rx="8" ry="1.4" fill="#000" opacity=".15"/><g transform="translate(699.6,459.7) scale(1.17)"><circle r="10" fill="url(#gGlobe)"/><path d="M-9.7,-2 C-9,-6.4 -4.6,-9.8 0.8,-9.9 C2,-9.4 1.6,-8.2 0.4,-7.6 C1,-6.4 -0.6,-5.6 -1.8,-5.4 C-2.2,-4 -3.6,-3.4 -4.6,-2.4 C-5.4,-1.2 -4.4,0.4 -3.2,1.6 C-4.4,1.4 -5.6,0.2 -6.4,-1 C-7.6,-0.6 -8.8,0.4 -9.7,-0.2Z" fill="url(#gLand)"/><path d="M-5.8,3 C-3.6,1.8 -0.6,2.6 2.6,4.6 C3.4,6 1.6,7.2 0.8,8.6 C-0.4,9.6 -1.8,9.9 -2.8,9.4 C-4.6,8 -6.6,5.4 -5.8,3Z" fill="url(#gLand)"/><path d="M6.2,-4.8 C8,-4.2 9.6,-2 9.8,0.6 C9.4,2.4 8.2,3.2 7,2.4 C6,1 5.8,-0.8 5.6,-2.4 C5.4,-3.6 5.6,-4.4 6.2,-4.8Z" fill="url(#gLand)"/><path d="M4.6,-8.6 C5.8,-8 6.8,-7 7.2,-6 C6.2,-6.2 5,-7 4.6,-8.6Z" fill="url(#gLand)"/><ellipse cx="-3.4" cy="-5.6" rx="2.6" ry="1.5" fill="#f4ffe0" opacity=".7" transform="rotate(-28 -3.4 -5.6)"/><circle r="10" fill="none" stroke="#141c8c" stroke-width=".5" opacity=".5"/></g><path d="M692,445 h15.5 l-4.6,6.6 v6.6 h-6.2 v-6.6z" fill="#e4e8ec" stroke="#6e7884" stroke-width=".9"/><rect x="698.2" y="450" width="2.2" height="7.2" fill="#fff"/><rect x="313.5" y="543.5" width="21" height="24.5" rx="1" fill="#eef1f5" stroke="#767e8c" stroke-width="1"/><rect x="314" y="544" width="20" height="2.4" fill="#d8dce4"/><rect x="316.5" y="548.5" width="15" height="15" fill="#f9fafc" stroke="#b4bac6" stroke-width=".7"/><rect x="318.5" y="551" width="11" height="2.6" fill="#fff" stroke="#a9b1c0" stroke-width=".6"/><rect x="318.5" y="555.5" width="11" height="2.6" fill="#fff" stroke="#a9b1c0" stroke-width=".6"/><path d="M319,560.5 h10" stroke="#b4bac6" stroke-width="1"/><rect x="319" y="564.8" width="4" height="1.4" fill="#38b0e8"/><rect x="324.5" y="564.8" width="3" height="1.4" fill="#c0c4cc"/><rect x="328.5" y="564.8" width="3" height="1.4" fill="#c0c4cc"/><path d="M1049.7,117.2 h10.5 l1,1 v4.5 l1.2,1 v7 l-1,1 h-10.7 l-1,-1 v-12.5z" fill="url(#gFolderV)" stroke="#d8ac3c" stroke-width=".6"/><rect x="1054.5" y="117.7" width="1" height="14" fill="#c9a038" opacity=".55"/><rect x="1059.9" y="124.8" width="1.2" height="2.6" fill="#eef4fa"/><rect x="1059.9" y="127.4" width="1.2" height="2.4" fill="#2a90e0"/><line x1="1052.6" y1="128.4" x2="1048.8" y2="132" stroke="#4a4a4a" stroke-width="1.7" stroke-linecap="round"/><line x1="1052.2" y1="128.8" x2="1048.8" y2="132" stroke="#e8e8e8" stroke-width=".7" stroke-dasharray="1 1"/><circle cx="1054.6" cy="126.4" r="3.1" fill="#dceefc" stroke="#5a6674" stroke-width=".9"/><rect x="1047.5" y="204" width="15" height="13" rx="1.2" fill="#f4f6f9" stroke="#6f6f6f" stroke-width="1"/><rect x="1048" y="204.5" width="14" height="2.4" fill="#dcdfe4"/><rect x="1048" y="206.9" width="14" height=".8" fill="#6f6f6f"/><rect x="1050.5" y="208.3" width="9" height="6" fill="#fff" stroke="#9aa0a8" stroke-width=".6"/><rect x="1053" y="210" width="5" height=".9" fill="#6b7f9c"/><rect x="1053" y="212" width="5" height=".9" fill="#6b7f9c"/><rect x="1053.5" y="215.7" width="3" height="1.2" fill="#2aa8e8"/><g transform="translate(1048.5,309)"><path d="M1.2,7.6 C0.8,4 3.6,1.8 7,2.2 L7,0.2 L12,3.6 L7,7 L7,5 C5,4.8 3.8,5.8 4,7.6Z" fill="#bcbcbc"/><path d="M12.8,6.4 C13.2,10 10.4,12.2 7,11.8 L7,13.8 L2,10.4 L7,7 L7,9 C9,9.2 10.2,8.2 10,6.4Z" fill="#bcbcbc"/></g><path d="M1053.5,331 l6.5,5 l-6.5,5 z" fill="#6fd84a" stroke="#2f9a1a" stroke-width="1.2" stroke-linejoin="round"/><rect x="1051" y="350.5" width="10" height="10" rx="1.8" fill="#8c8c8c"/><rect x="1048.5" y="393.5" width="14" height="12" rx="1.2" fill="#fff" stroke="#6a6a6a" stroke-width="1"/><rect x="1049" y="394" width="13" height="2.2" fill="#e8e8e8"/><rect x="1049" y="396.2" width="13" height=".8" fill="#6a6a6a"/><g transform="translate(1055.5,401) scale(0.34)"><circle r="10" fill="url(#gGlobe)"/><path d="M-9.7,-2 C-9,-6.4 -4.6,-9.8 0.8,-9.9 C2,-9.4 1.6,-8.2 0.4,-7.6 C1,-6.4 -0.6,-5.6 -1.8,-5.4 C-2.2,-4 -3.6,-3.4 -4.6,-2.4 C-5.4,-1.2 -4.4,0.4 -3.2,1.6 C-4.4,1.4 -5.6,0.2 -6.4,-1 C-7.6,-0.6 -8.8,0.4 -9.7,-0.2Z" fill="url(#gLand)"/><path d="M-5.8,3 C-3.6,1.8 -0.6,2.6 2.6,4.6 C3.4,6 1.6,7.2 0.8,8.6 C-0.4,9.6 -1.8,9.9 -2.8,9.4 C-4.6,8 -6.6,5.4 -5.8,3Z" fill="url(#gLand)"/><path d="M6.2,-4.8 C8,-4.2 9.6,-2 9.8,0.6 C9.4,2.4 8.2,3.2 7,2.4 C6,1 5.8,-0.8 5.6,-2.4 C5.4,-3.6 5.6,-4.4 6.2,-4.8Z" fill="url(#gLand)"/><path d="M4.6,-8.6 C5.8,-8 6.8,-7 7.2,-6 C6.2,-6.2 5,-7 4.6,-8.6Z" fill="url(#gLand)"/><ellipse cx="-3.4" cy="-5.6" rx="2.6" ry="1.5" fill="#f4ffe0" opacity=".7" transform="rotate(-28 -3.4 -5.6)"/><circle r="10" fill="none" stroke="#141c8c" stroke-width=".5" opacity=".5"/></g><rect x="1048.5" y="413.5" width="14" height="12" rx="1.2" fill="#fff" stroke="#6a6a6a" stroke-width="1"/><rect x="1049" y="414" width="13" height="2.2" fill="#e8e8e8"/><rect x="1049" y="416.2" width="13" height=".8" fill="#6a6a6a"/><g transform="translate(1055.5,421) scale(0.34)"><circle r="10" fill="url(#gGlobe)"/><path d="M-9.7,-2 C-9,-6.4 -4.6,-9.8 0.8,-9.9 C2,-9.4 1.6,-8.2 0.4,-7.6 C1,-6.4 -0.6,-5.6 -1.8,-5.4 C-2.2,-4 -3.6,-3.4 -4.6,-2.4 C-5.4,-1.2 -4.4,0.4 -3.2,1.6 C-4.4,1.4 -5.6,0.2 -6.4,-1 C-7.6,-0.6 -8.8,0.4 -9.7,-0.2Z" fill="url(#gLand)"/><path d="M-5.8,3 C-3.6,1.8 -0.6,2.6 2.6,4.6 C3.4,6 1.6,7.2 0.8,8.6 C-0.4,9.6 -1.8,9.9 -2.8,9.4 C-4.6,8 -6.6,5.4 -5.8,3Z" fill="url(#gLand)"/><path d="M6.2,-4.8 C8,-4.2 9.6,-2 9.8,0.6 C9.4,2.4 8.2,3.2 7,2.4 C6,1 5.8,-0.8 5.6,-2.4 C5.4,-3.6 5.6,-4.4 6.2,-4.8Z" fill="url(#gLand)"/><path d="M4.6,-8.6 C5.8,-8 6.8,-7 7.2,-6 C6.2,-6.2 5,-7 4.6,-8.6Z" fill="url(#gLand)"/><ellipse cx="-3.4" cy="-5.6" rx="2.6" ry="1.5" fill="#f4ffe0" opacity=".7" transform="rotate(-28 -3.4 -5.6)"/><circle r="10" fill="none" stroke="#141c8c" stroke-width=".5" opacity=".5"/></g><circle cx="1056" cy="546" r="7.5" fill="url(#gHelp)" stroke="#8c96a6" stroke-width="1.4"/><text x="1056" y="550.264" font-family="Liberation Sans, sans-serif" font-weight="bold" font-size="12.3" fill="#fff" text-anchor="middle">?</text><rect x="283" y="658.5" width="14.5" height="14" rx="1.2" fill="#f8f4e2" stroke="#7c7c7c" stroke-width="1"/><rect x="283.5" y="659" width="13.5" height="2.4" fill="#b4b4b4"/><rect x="283.5" y="661.4" width="13.5" height=".8" fill="#7c7c7c"/><rect x="287.5" y="662" width="1" height="10" fill="#a8a8a8"/><rect x="293.5" y="662" width="1" height="10" fill="#c8c8c8"/><path d="M289,664.5 h3.5 M289,667 h3.5 M289,669.5 h3.5" stroke="#3a3a3a" stroke-width="1"/><path d="M285,664.5 h1 M285,667 h1 M285,669.5 h1 M295,664.5 h1 M295,667 h1" stroke="#5a8ad0" stroke-width="1"/><path d="M458.6,659 h5 l.8,.8 v3 h-5.8z" fill="#efc752" stroke="#d9a93a" stroke-width=".5"/><rect x="460.4" y="659.6" width="1.3" height="1.3" fill="#2a8ae0"/><path d="M450.5,661 v10.4" stroke="#d8a838" stroke-width="1.3"/><rect x="451.3" y="658.4" width="7.6" height="8" fill="#fff" stroke="#a8a8a8" stroke-width=".7"/><rect x="453" y="660.2" width="7.2" height="6" fill="#fff" stroke="#a8a8a8" stroke-width=".7"/><path d="M450.3,671.7 L453.6,662.4 h5.6 l1,1.2 h4.4 v8 z" fill="url(#gFolder)" stroke="#d2a43c" stroke-width=".6"/><path d="M458.1,664 h5.4 l2.4,2.4 v7.4 h-7.8z" fill="#fff" stroke="#8c8c8c" stroke-width=".8"/><path d="M460,667.4 h2 M460,669.4 h3.8 M460,671.4 h3.8" stroke="#2a6ed0" stroke-width="1.2"/><g transform="translate(1220,690) scale(0.42)"><circle r="10" fill="url(#gGlobe)"/><path d="M-9.7,-2 C-9,-6.4 -4.6,-9.8 0.8,-9.9 C2,-9.4 1.6,-8.2 0.4,-7.6 C1,-6.4 -0.6,-5.6 -1.8,-5.4 C-2.2,-4 -3.6,-3.4 -4.6,-2.4 C-5.4,-1.2 -4.4,0.4 -3.2,1.6 C-4.4,1.4 -5.6,0.2 -6.4,-1 C-7.6,-0.6 -8.8,0.4 -9.7,-0.2Z" fill="url(#gLand)"/><path d="M-5.8,3 C-3.6,1.8 -0.6,2.6 2.6,4.6 C3.4,6 1.6,7.2 0.8,8.6 C-0.4,9.6 -1.8,9.9 -2.8,9.4 C-4.6,8 -6.6,5.4 -5.8,3Z" fill="url(#gLand)"/><path d="M6.2,-4.8 C8,-4.2 9.6,-2 9.8,0.6 C9.4,2.4 8.2,3.2 7,2.4 C6,1 5.8,-0.8 5.6,-2.4 C5.4,-3.6 5.6,-4.4 6.2,-4.8Z" fill="url(#gLand)"/><path d="M4.6,-8.6 C5.8,-8 6.8,-7 7.2,-6 C6.2,-6.2 5,-7 4.6,-8.6Z" fill="url(#gLand)"/><ellipse cx="-3.4" cy="-5.6" rx="2.6" ry="1.5" fill="#f4ffe0" opacity=".7" transform="rotate(-28 -3.4 -5.6)"/><circle r="10" fill="none" stroke="#141c8c" stroke-width=".5" opacity=".5"/></g><rect x="1223.3" y="687" width="6.4" height="13.5" fill="url(#gSrv)" stroke="#7c8694" stroke-width=".6"/><rect x="1224.1" y="687.9" width="4.8" height="1.8" fill="#eef2f6"/><rect x="1225.1" y="688.3" width="2.8" height=".9" fill="#26343f"/><rect x="1224.1" y="691.2" width="4.8" height="1.5" fill="#f4f7fa"/><rect x="1224.1" y="693.3" width="4.8" height=".6" fill="#7c8694"/><rect x="1226.7" y="697.3" width="2" height="2" fill="#5fe02c"/><rect x="1238" y="691" width="2" height="2" fill="#b4b4b4"/><rect x="1234" y="695" width="2" height="2" fill="#b4b4b4"/><rect x="1238" y="695" width="2" height="2" fill="#b4b4b4"/><rect x="1230" y="699" width="2" height="2" fill="#b4b4b4"/><rect x="1234" y="699" width="2" height="2" fill="#b4b4b4"/><rect x="1238" y="699" width="2" height="2" fill="#b4b4b4"/></svg>

<!-- context menu -->
<div class="a" style="left:127px;top:193px;width:354px;height:258px;background:#fbfbfb;border:1px solid #a0a0a0;box-shadow:2.5px 2.5px 2px rgba(0,0,0,.5)"></div>
<div class="a" style="left:129px;top:195px;width:23px;height:256px;background:#f0f0f0"></div>
<div class="sep" style="left:160px;top:242px;width:320px"></div>
<div class="sep" style="left:160px;top:292px;width:320px"></div>
<div class="sep" style="left:160px;top:320px;width:320px"></div>
<div class="sep" style="left:160px;top:348px;width:320px"></div>
<div class="sep" style="left:160px;top:398px;width:320px"></div>
<div class="sep" style="left:160px;top:426px;width:320px"></div>
<div class="a" style="left:129px;top:323px;width:350px;height:20px;background:#d6e9f8;border:1px solid #2f8bd9"></div>
<!-- submenu -->
<div class="a" style="left:482px;top:323px;width:243px;height:124px;background:#fbfbfb;border:1px solid #a0a0a0;box-shadow:2.5px 2.5px 2px rgba(0,0,0,.5)"></div>
<div class="a" style="left:484px;top:325px;width:23px;height:122px;background:#f0f0f0"></div>
<div class="sep" style="left:515px;top:394px;width:210px"></div>
<div class="sep" style="left:515px;top:422px;width:210px"></div>
<div class="a" style="left:484px;top:347px;width:240px;height:20px;background:#d6e9f8;border:1px solid #2f8bd9"></div>

<span class="t m " style="left:163.2px;top:198px;transform:scaleX(1.0395)">Проводник</span>
<span class="t m " style="left:163.2px;top:220px;transform:scaleX(0.9737)">Редактировать разрешения...</span>
<span class="t m " style="left:163.2px;top:248px;transform:scaleX(0.9887)">Добавить приложение...</span>
<span class="t m " style="left:163.2px;top:270px;transform:scaleX(0.9909)">Добавить виртуальный каталог...</span>
<span class="t m " style="left:163.2px;top:298px;transform:scaleX(0.9877)">Изменить привязки...</span>
<span class="t m " style="left:163.2px;top:326px;transform:scaleX(0.9981)">Управление веб-сайтом</span>
<span class="t m " style="left:163.2px;top:354px;transform:scaleX(0.9955)">Обновить</span>
<span class="t m " style="left:163.2px;top:376px;transform:scaleX(0.9623)">Удалить</span>
<span class="t m " style="left:163.2px;top:404px;transform:scaleX(0.9843)">Переименовать</span>
<span class="t m " style="left:163.2px;top:432px;transform:scaleX(1.0201)">Переключиться в режим просмотра содержимого</span>
<span class="t m gm" style="left:517.2px;top:328px;transform:scaleX(0.9906)">Перезапустить</span>
<span class="t m " style="left:517.2px;top:350px;transform:scaleX(0.9887)">Запустить</span>
<span class="t m gm" style="left:517.2px;top:372px;transform:scaleX(0.9939)">Остановить</span>
<span class="t m " style="left:517.2px;top:400px;transform:scaleX(1.0268)">Обзор</span>
<span class="t m " style="left:517.2px;top:428px;transform:scaleX(1.0025)">Дополнительные параметры...</span>
<svg class="a" style="left:0;top:0" width="1240" height="703" viewBox="0 0 1240 703"><path d="M133,198 h10.5 l1,1 v4.5 l1.2,1 v7 l-1,1 h-10.7 l-1,-1 v-12.5z" fill="url(#gFolderV)" stroke="#d8ac3c" stroke-width=".6"/><rect x="137.8" y="198.5" width="1" height="14" fill="#c9a038" opacity=".55"/><rect x="143.2" y="205.6" width="1.2" height="2.6" fill="#eef4fa"/><rect x="143.2" y="208.2" width="1.2" height="2.4" fill="#2a90e0"/><line x1="135.9" y1="209.2" x2="132.1" y2="212.8" stroke="#4a4a4a" stroke-width="1.7" stroke-linecap="round"/><line x1="135.5" y1="209.6" x2="132.1" y2="212.8" stroke="#e8e8e8" stroke-width=".7" stroke-dasharray="1 1"/><circle cx="137.9" cy="207.2" r="3.1" fill="#dceefc" stroke="#5a6674" stroke-width=".9"/><g transform="translate(141.4,253) scale(0.53)"><circle r="10" fill="url(#gGlobe)"/><path d="M-9.7,-2 C-9,-6.4 -4.6,-9.8 0.8,-9.9 C2,-9.4 1.6,-8.2 0.4,-7.6 C1,-6.4 -0.6,-5.6 -1.8,-5.4 C-2.2,-4 -3.6,-3.4 -4.6,-2.4 C-5.4,-1.2 -4.4,0.4 -3.2,1.6 C-4.4,1.4 -5.6,0.2 -6.4,-1 C-7.6,-0.6 -8.8,0.4 -9.7,-0.2Z" fill="url(#gLand)"/><path d="M-5.8,3 C-3.6,1.8 -0.6,2.6 2.6,4.6 C3.4,6 1.6,7.2 0.8,8.6 C-0.4,9.6 -1.8,9.9 -2.8,9.4 C-4.6,8 -6.6,5.4 -5.8,3Z" fill="url(#gLand)"/><path d="M6.2,-4.8 C8,-4.2 9.6,-2 9.8,0.6 C9.4,2.4 8.2,3.2 7,2.4 C6,1 5.8,-0.8 5.6,-2.4 C5.4,-3.6 5.6,-4.4 6.2,-4.8Z" fill="url(#gLand)"/><path d="M4.6,-8.6 C5.8,-8 6.8,-7 7.2,-6 C6.2,-6.2 5,-7 4.6,-8.6Z" fill="url(#gLand)"/><ellipse cx="-3.4" cy="-5.6" rx="2.6" ry="1.5" fill="#f4ffe0" opacity=".7" transform="rotate(-28 -3.4 -5.6)"/><circle r="10" fill="none" stroke="#141c8c" stroke-width=".5" opacity=".5"/></g><path d="M133.4,253.8 h5.04 l1.96,1.96 v6.44 h-7 z" fill="#fff" stroke="#8a8f98" stroke-width=".8"/><path d="M135.2,255.6 h5.04 l1.96,1.96 v6.34 h-7 z" fill="#fff" stroke="#8a8f98" stroke-width=".8"/><rect x="136.74" y="258.09" width="3.92" height="1" fill="#3a74c8"/><rect x="136.74" y="259.75" width="3.92" height="1" fill="#3a74c8"/><rect x="136.74" y="261.41" width="3.92" height="1" fill="#3a74c8"/><polygon points="146.70,255.20 144.31,255.83 145.56,257.96 143.43,256.71 142.80,259.10 142.17,256.71 140.04,257.96 141.29,255.83 138.90,255.20 141.29,254.57 140.04,252.44 142.17,253.69 142.80,251.30 143.43,253.69 145.56,252.44 144.31,254.57" fill="#ffb52e" stroke="#e88a10" stroke-width=".4"/><path d="M133.3,271.6 h5.44 l1.5,2 h6.66 v10.2 h-13.6 z" fill="url(#gFolder)" stroke="#caa040" stroke-width=".7"/><polygon points="148.30,273.40 145.91,274.03 147.16,276.16 145.03,274.91 144.40,277.30 143.77,274.91 141.64,276.16 142.89,274.03 140.50,273.40 142.89,272.77 141.64,270.64 143.77,271.89 144.40,269.50 145.03,271.89 147.16,270.64 145.91,272.77" fill="#ffb52e" stroke="#e88a10" stroke-width=".4"/><rect x="132.3" y="278.2" width="7.6" height="7.4" fill="#e4e8f6" stroke="#9aa2b4" stroke-width=".7"/><path d="M133.8,284.4 c0,-2.6 1.2,-3.6 3,-3.6 v-1.3 l2.1,2.1 l-2.1,2.1 v-1.3 c-1,0 -1.8,0.4 -3,2z" fill="#2a34b8"/><path d="M467,330.25 l4.5,3.75 l-4.5,3.75 z" fill="#000"/><g transform="translate(132,354.5) scale(1.03333)"><rect x=".5" y=".5" width="14" height="14" rx="1.5" fill="url(#gGreen)" stroke="#9aa59a" stroke-width="1"/><path d="M8.6,3.2 C6,3 4.6,4.4 4.6,6.4" fill="none" stroke="#fff" stroke-width="1.9"/><path d="M1.9,6 h5.4 l-2.7,3.3z" fill="#fff"/><path d="M6.4,11.8 C9,12 10.4,10.6 10.4,8.6" fill="none" stroke="#fff" stroke-width="1.9"/><path d="M7.7,9 h5.4 l-2.7,-3.3z" fill="#fff"/></g><path d="M134,378.6 l12,11.2 M146,378.6 l-12,11.2" stroke="#b01010" stroke-width="3.2" stroke-linecap="round" fill="none"/><path d="M134,378.6 l12,11.2 M146,378.6 l-12,11.2" stroke="#ee2a2a" stroke-width="2" stroke-linecap="round" fill="none"/><path d="M140.6,433 h5 l.8,.8 v3 h-5.8z" fill="#efc752" stroke="#d9a93a" stroke-width=".5"/><rect x="142.4" y="433.6" width="1.3" height="1.3" fill="#2a8ae0"/><path d="M132.5,435 v10.4" stroke="#d8a838" stroke-width="1.3"/><rect x="133.3" y="432.4" width="7.6" height="8" fill="#fff" stroke="#a8a8a8" stroke-width=".7"/><rect x="135" y="434.2" width="7.2" height="6" fill="#fff" stroke="#a8a8a8" stroke-width=".7"/><path d="M132.3,445.7 L135.6,436.4 h5.6 l1,1.2 h4.4 v8 z" fill="url(#gFolder)" stroke="#d2a43c" stroke-width=".6"/><path d="M140.1,438 h5.4 l2.4,2.4 v7.4 h-7.8z" fill="#fff" stroke="#8c8c8c" stroke-width=".8"/><path d="M142,441.4 h2 M142,443.4 h3.8 M142,445.4 h3.8" stroke="#2a6ed0" stroke-width="1.2"/><g transform="translate(488,329)"><path d="M1.2,7.6 C0.8,4 3.6,1.8 7,2.2 L7,0.2 L12,3.6 L7,7 L7,5 C5,4.8 3.8,5.8 4,7.6Z" fill="#c4c4c4"/><path d="M12.8,6.4 C13.2,10 10.4,12.2 7,11.8 L7,13.8 L2,10.4 L7,7 L7,9 C9,9.2 10.2,8.2 10,6.4Z" fill="#c4c4c4"/></g><path d="M492.5,353 l6.5,5 l-6.5,5 z" fill="#6fd84a" stroke="#2f9a1a" stroke-width="1.2" stroke-linejoin="round"/><rect x="490.5" y="375" width="10" height="10" rx="1.8" fill="#a9a9a9"/><rect x="488" y="401.5" width="14" height="12" rx="1.2" fill="#fff" stroke="#6a6a6a" stroke-width="1"/><rect x="488.5" y="402" width="13" height="2.2" fill="#e8e8e8"/><rect x="488.5" y="404.2" width="13" height=".8" fill="#6a6a6a"/><g transform="translate(495,409) scale(0.34)"><circle r="10" fill="url(#gGlobe)"/><path d="M-9.7,-2 C-9,-6.4 -4.6,-9.8 0.8,-9.9 C2,-9.4 1.6,-8.2 0.4,-7.6 C1,-6.4 -0.6,-5.6 -1.8,-5.4 C-2.2,-4 -3.6,-3.4 -4.6,-2.4 C-5.4,-1.2 -4.4,0.4 -3.2,1.6 C-4.4,1.4 -5.6,0.2 -6.4,-1 C-7.6,-0.6 -8.8,0.4 -9.7,-0.2Z" fill="url(#gLand)"/><path d="M-5.8,3 C-3.6,1.8 -0.6,2.6 2.6,4.6 C3.4,6 1.6,7.2 0.8,8.6 C-0.4,9.6 -1.8,9.9 -2.8,9.4 C-4.6,8 -6.6,5.4 -5.8,3Z" fill="url(#gLand)"/><path d="M6.2,-4.8 C8,-4.2 9.6,-2 9.8,0.6 C9.4,2.4 8.2,3.2 7,2.4 C6,1 5.8,-0.8 5.6,-2.4 C5.4,-3.6 5.6,-4.4 6.2,-4.8Z" fill="url(#gLand)"/><path d="M4.6,-8.6 C5.8,-8 6.8,-7 7.2,-6 C6.2,-6.2 5,-7 4.6,-8.6Z" fill="url(#gLand)"/><ellipse cx="-3.4" cy="-5.6" rx="2.6" ry="1.5" fill="#f4ffe0" opacity=".7" transform="rotate(-28 -3.4 -5.6)"/><circle r="10" fill="none" stroke="#141c8c" stroke-width=".5" opacity=".5"/></g></svg>
</body></html>
